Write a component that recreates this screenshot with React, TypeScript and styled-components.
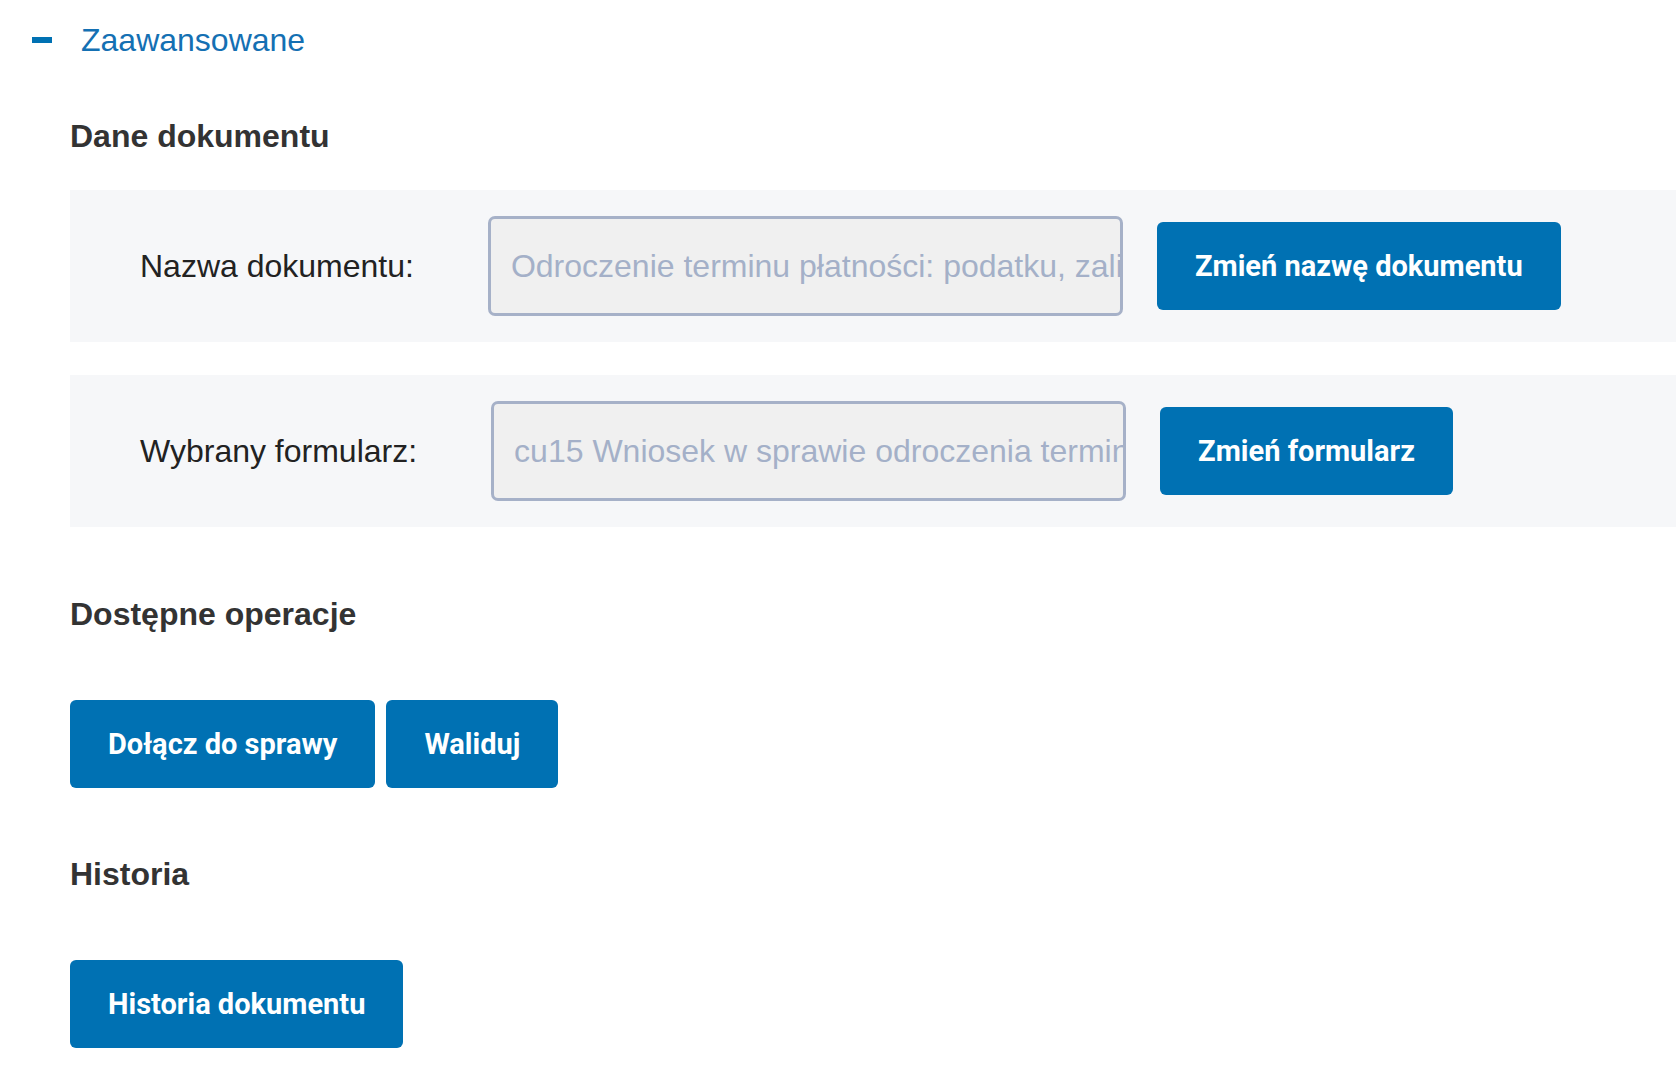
import * as React from 'react';
import styled, { createGlobalStyle } from 'styled-components';

const BLUE = '#0071b3';

const GlobalStyle = createGlobalStyle`
  html, body {
    margin: 0;
    padding: 0;
    background: #ffffff;
  }
  body {
    font-family: 'Liberation Sans', Arial, Helvetica, sans-serif;
    color: #222222;
  }
`;

const fields = [
  {
    label: 'Nazwa dokumentu:',
    value:
      'Odroczenie terminu płatności: podatku, zaliczki na podatek lub zaległości podatkowej',
    action: 'Zmień nazwę dokumentu',
  },
  {
    label: 'Wybrany formularz:',
    value:
      'cu15 Wniosek w sprawie odroczenia terminu płatności podatku lub zaległości podatkowej',
    action: 'Zmień formularz',
  },
];

export default function App() {
  return (
    <>
      <GlobalStyle />
      <Page>
        <Toggle>
          <Minus />
          <ToggleText>Zaawansowane</ToggleText>
        </Toggle>

        <Content>
          <Heading>Dane dokumentu</Heading>
          <Panels>
            {fields.map((f) => (
              <Panel key={f.label}>
                <Label>{f.label}</Label>
                <Field readOnly value={f.value} />
                <Button>{f.action}</Button>
              </Panel>
            ))}
          </Panels>

          <Heading $top={68}>Dostępne operacje</Heading>
          <Actions>
            <Button>Dołącz do sprawy</Button>
            <Button>Waliduj</Button>
          </Actions>

          <Heading $top={67}>Historia</Heading>
          <Actions>
            <Button>Historia dokumentu</Button>
          </Actions>
        </Content>
      </Page>
    </>
  );
}

const Page = styled.div`
  padding-top: 21px;
  padding-bottom: 40px;
`;

const Toggle = styled.div`
  display: flex;
  align-items: center;
  padding-left: 32px;
  height: 38px;
  cursor: pointer;
`;

const Minus = styled.span`
  display: block;
  width: 20px;
  height: 6px;
  background: ${BLUE};
  margin-right: 29px;
`;

const ToggleText = styled.span`
  font-size: 32px;
  line-height: 38px;
  color: #1470b3;
`;

const Content = styled.div`
  padding-left: 70px;
`;

const Heading = styled.h2<{ $top?: number }>`
  margin: ${(p) => p.$top ?? 58}px 0 0;
  font-size: 32px;
  line-height: 38px;
  font-weight: bold;
  color: #333333;
`;

const Panels = styled.div`
  display: flex;
  flex-direction: column;
  gap: 33px;
  margin-top: 35px;
`;

const Panel = styled.div`
  display: flex;
  align-items: center;
  height: 152px;
  padding-left: 70px;
  background: #f6f7f9;
`;

const Label = styled.span`
  font-size: 32px;
  color: #222222;
  margin-right: 74px;
  white-space: nowrap;
`;

const Field = styled.input`
  box-sizing: border-box;
  width: 635px;
  height: 100px;
  padding: 0 0 0 20px;
  border: 3px solid #a6b1c8;
  border-radius: 7px;
  background: #f0f0f0;
  font-family: 'Liberation Sans', Arial, Helvetica, sans-serif;
  font-size: 32px;
  color: #a4b0c8;
  outline: none;
  margin-right: 34px;
`;

const Button = styled.button`
  box-sizing: border-box;
  height: 88px;
  padding: 0 38px;
  border: none;
  border-radius: 6px;
  background: ${BLUE};
  color: #ffffff;
  font-family: Roboto, 'Liberation Sans', sans-serif;
  font-weight: bold;
  font-size: 29px;
  cursor: pointer;
  white-space: nowrap;
`;

const Actions = styled.div`
  display: flex;
  gap: 11px;
  margin-top: 67px;
`;
